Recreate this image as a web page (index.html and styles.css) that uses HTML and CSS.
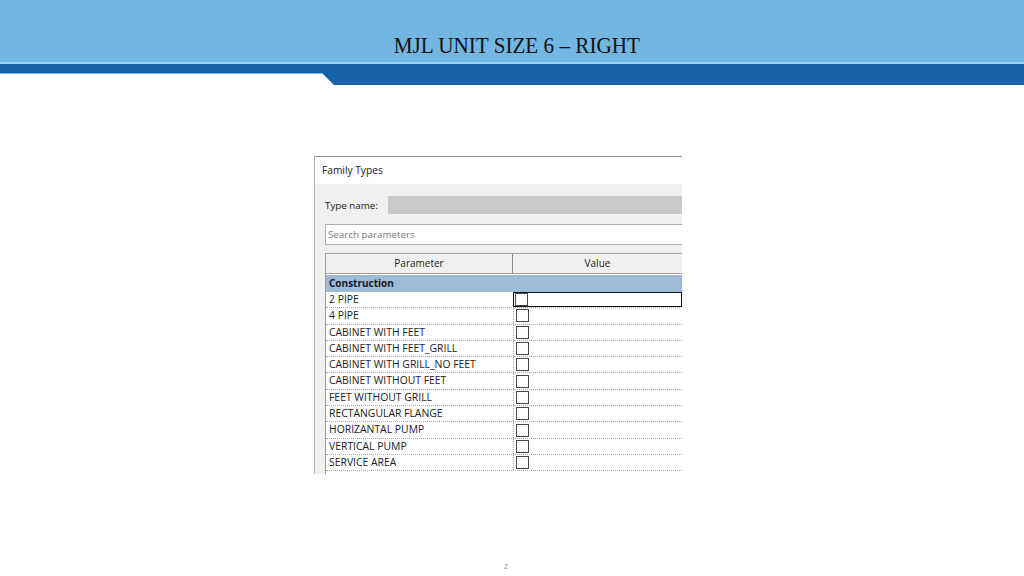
FILE: index.html
```html
<!DOCTYPE html>
<html>
<head>
<meta charset="utf-8">
<link rel="stylesheet" href="styles.css">
</head>
<body>
<header class="top">
  <div class="title-area"><h1 class="title">MJL UNIT SIZE 6 – RIGHT</h1></div>
  <svg class="band" width="1024" height="24" viewBox="0 0 1024 24">
    <rect x="0" y="0" width="1024" height="2" fill="#9fd0f0"/>
    <polygon points="0,2 1024,2 1024,23 334,23 322,11 0,11" fill="#1860a8"/>
    <polygon points="0,11 322,11 323,12 0,12" fill="#7fb8e6"/>
  </svg>
</header>
<main class="stage">
  <section class="dialog">
    <div class="dlg-title">Family Types</div>
    <div class="dlg-body">
      <div class="type-row">
        <span class="type-label">Type name:</span>
        <div class="type-input"></div>
      </div>
      <div class="search">Search parameters</div>
      <div class="table">
        <div class="thead">
          <div class="th th-param">Parameter</div>
          <div class="th th-value">Value</div>
        </div>
        <div class="group">Construction</div>
        <div class="row selected"><div class="cell-p">2 PIPE</div><div class="cell-v"><span class="cb"></span></div></div>
        <div class="row"><div class="cell-p">4 PIPE</div><div class="cell-v"><span class="cb"></span></div></div>
        <div class="row"><div class="cell-p">CABINET WITH FEET</div><div class="cell-v"><span class="cb"></span></div></div>
        <div class="row"><div class="cell-p">CABINET WITH FEET_GRILL</div><div class="cell-v"><span class="cb"></span></div></div>
        <div class="row"><div class="cell-p">CABINET WITH GRILL_NO FEET</div><div class="cell-v"><span class="cb"></span></div></div>
        <div class="row"><div class="cell-p">CABINET WITHOUT FEET</div><div class="cell-v"><span class="cb"></span></div></div>
        <div class="row"><div class="cell-p">FEET WITHOUT GRILL</div><div class="cell-v"><span class="cb"></span></div></div>
        <div class="row"><div class="cell-p">RECTANGULAR FLANGE</div><div class="cell-v"><span class="cb"></span></div></div>
        <div class="row"><div class="cell-p">HORIZANTAL PUMP</div><div class="cell-v"><span class="cb"></span></div></div>
        <div class="row"><div class="cell-p">VERTICAL PUMP</div><div class="cell-v"><span class="cb"></span></div></div>
        <div class="row"><div class="cell-p">SERVICE AREA</div><div class="cell-v"><span class="cb"></span></div></div>
      </div>
    </div>
  </section>
</main>
<footer class="pagenum">2</footer>
</body>
</html>
```
FILE: styles.css
```css
html, body {
  margin: 0;
  padding: 0;
  background: #ffffff;
  width: 1024px;
  height: 576px;
  overflow: hidden;
  position: relative;
}
.top {
  display: block;
}
.title-area {
  height: 62px;
  background: #74b6e2;
  display: flex;
  justify-content: center;
  align-items: flex-end;
}
.title {
  margin: 0 0 3px 10px;
  font-family: "Liberation Serif", serif;
  font-weight: normal;
  font-size: 23px;
  color: #111111;
  letter-spacing: 0;
  transform: scaleX(0.92);
  line-height: 26px;
}
.band {
  display: block;
}
.stage {
  padding: 70px 0 0 314px;
}
.dialog {
  width: 367px;
  height: 317px;
  border-top: 1px solid #8e8e8e;
  border-left: 1px solid #b4b4b4;
  font-family: "Open Sans", "Noto Sans", sans-serif;
  font-size: 10px;
  color: #222222;
  display: flex;
  flex-direction: column;
}
.dlg-title {
  height: 27px;
  background: #ffffff;
  padding-left: 7px;
  line-height: 27px;
  font-size: 10.2px;
  color: #1a1a1a;
}
.dlg-body {
  flex: 1;
  background: #f0f0f0;
  padding: 12px 0 0 10px;
  display: flex;
  flex-direction: column;
}
.type-row {
  display: flex;
  align-items: center;
  height: 18px;
}
.type-label {
  width: 63px;
  font-size: 9.8px;
  color: #1a1a1a;
}
.type-input {
  flex: 1;
  height: 18px;
  background: #c9c9c9;
}
.search {
  margin-top: 10px;
  height: 19px;
  border: 1px solid #adadad;
  border-right: none;
  background: #ffffff;
  color: #7a7a7a;
  font-size: 9.8px;
  line-height: 19px;
  padding-left: 2px;
}
.table {
  margin-top: 8px;
  border-left: 1px solid #9a9a9a;
  flex: 1;
  display: flex;
  flex-direction: column;
  background: #ffffff;
}
.thead {
  display: flex;
  height: 19px;
  background: #f0f0f0;
  border-top: 1px solid #a0a0a0;
  border-bottom: 1px solid #a0a0a0;
}
.th {
  text-align: center;
  line-height: 18px;
  font-size: 10px;
  color: #1a1a1a;
}
.th-param {
  width: 186px;
  border-right: 1px solid #8a8a8a;
}
.th-value {
  flex: 1;
}
.group {
  margin-top: 1px;
  height: 17px;
  background: #9dbbd9;
  font-weight: bold;
  line-height: 17px;
  padding-left: 3px;
  font-size: 10px;
  color: #1a1a1a;
}
.row {
  display: flex;
  height: 15.3px;
  border-bottom: 1px dotted #a8a8a8;
}
.cell-p {
  width: 184px;
  padding-left: 3px;
  line-height: 15px;
  font-size: 10.4px;
  white-space: nowrap;
  color: #1a1a1a;
}
.cell-v {
  flex: 1;
  border-left: 1px dotted #a8a8a8;
  display: flex;
  align-items: center;
  padding-left: 2px;
}
.row.selected .cell-v {
  border: 1px solid #111111;
  padding-left: 1px;
}
.cb {
  width: 11px;
  height: 11px;
  border: 1px solid #4a4a4a;
  background: #ffffff;
  display: block;
}
.pagenum {
  position: absolute;
  left: 504px;
  top: 563px;
  font-family: "Liberation Sans", sans-serif;
  font-size: 7px;
  color: #888888;
}
```
